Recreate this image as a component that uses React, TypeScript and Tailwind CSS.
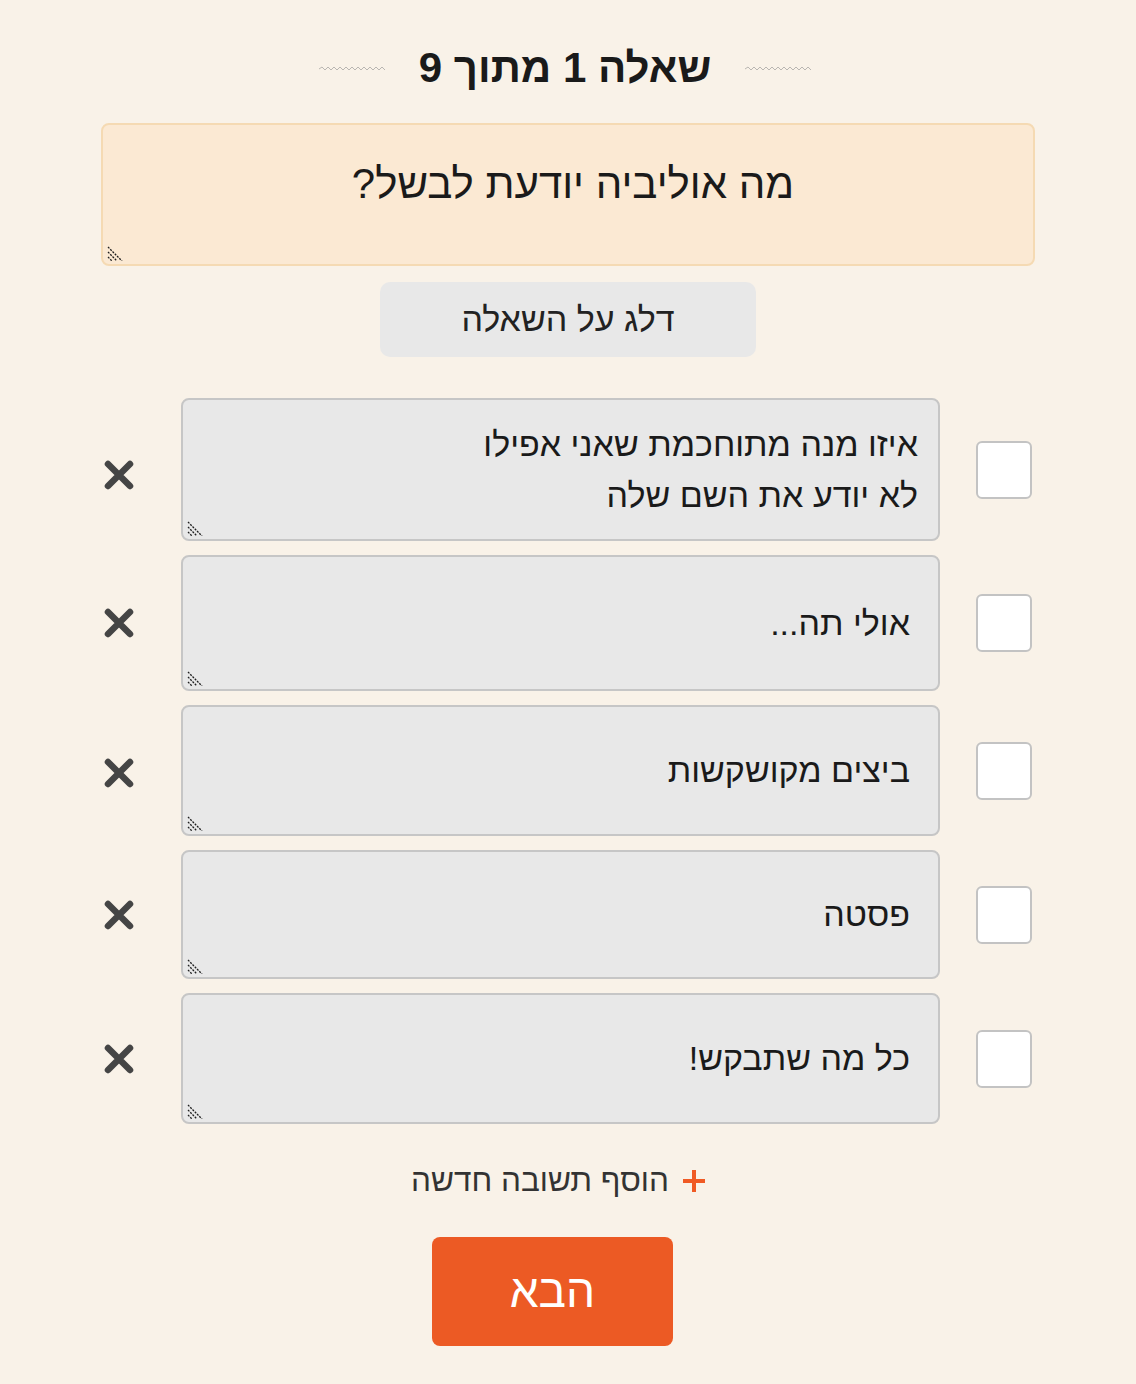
const answers = [
  { lines: ["איזו מנה מתוחכמת שאני אפילו", "לא יודע את השם שלה"], h: "h-[143px]", pr: "pr-5", xOff: "mt-[11px]" },
  { lines: ["אולי תה..."], h: "h-[136px]", pr: "pr-7", xOff: "" },
  { lines: ["ביצים מקושקשות"], h: "h-[131px]", pr: "pr-7", xOff: "mt-[4px]" },
  { lines: ["פסטה"], h: "h-[129px]", pr: "pr-7", xOff: "" },
  { lines: ["כל מה שתבקש!"], h: "h-[131px]", pr: "pr-7", xOff: "" },
]

function Squiggle() {
  // little zigzag rule beside the heading
  let d = "M0 3"
  for (let i = 1; i <= 22; i++) d += ` L${i * 3} ${i % 2 ? 1 : 4}`
  return (
    <svg width="66" height="5" viewBox="0 0 66 5" className="shrink-0">
      <path d={d} fill="none" stroke="#b9b6b2" strokeWidth="1" />
    </svg>
  )
}

function Grip() {
  return (
    <svg width="18" height="18" viewBox="0 0 18 18" className="absolute left-[3px] bottom-[3px]">
      <path
        d="M2 4 L16 18 M2 9 L11 18 M2 14 L6 18"
        stroke="#1f1f1f"
        strokeWidth="1.3"
        strokeDasharray="2 1.2"
        fill="none"
      />
    </svg>
  )
}

function Cross() {
  return (
    <svg width="32" height="32" viewBox="0 0 32 32">
      <path d="M5 5 L27 27 M27 5 L5 27" stroke="#454545" strokeWidth="6.5" strokeLinecap="round" />
    </svg>
  )
}

export default function App() {
  return (
    <div
      dir="rtl"
      className="min-h-[1384px] bg-[#f9f2e8] text-[#1a1a1a]"
      style={{ fontFamily: '"Liberation Sans", "DejaVu Sans", sans-serif' }}
    >
      <div className="w-[934px] mx-auto pt-[40px]">
        <div className="flex items-center justify-center gap-[34px] h-[56px] pr-[6px]">
          <Squiggle />
          <h1 className="text-[42px] font-bold leading-none">שאלה 1 מתוך 9</h1>
          <Squiggle />
        </div>

        <div className="relative mt-[27px] h-[143px] rounded-[8px] border-2 border-[#f5dab3] bg-[#fbe9d3] flex items-center justify-center pb-[22px] pl-[10px]">
          <span className="text-[42px]">מה אוליביה יודעת לבשל?</span>
          <Grip />
        </div>

        <div className="flex justify-center mt-[16px]">
          <button className="w-[376px] h-[75px] rounded-[10px] bg-[#e8e8e8] text-[34px] text-[#222]">
            דלג על השאלה
          </button>
        </div>

        <div className="mt-[41px] flex flex-col gap-[14px]">
          {answers.map((a, i) => (
            <div key={i} className="flex items-center">
              <div className="w-[56px] h-[58px] mr-[3px] ml-[36px] shrink-0 rounded-[6px] border-2 border-[#c3c3c3] bg-white" />
              <div
                className={`relative w-[759px] ${a.h} shrink-0 rounded-[8px] border-2 border-[#c6c6c6] bg-[#e8e8e8] flex flex-col justify-center ${a.pr} text-[34px] leading-[51px]`}
              >
                {a.lines.map((l) => (
                  <div key={l}>{l}</div>
                ))}
                <Grip />
              </div>
              <div className={`flex-1 flex justify-end pl-[2px] ${a.xOff}`}>
                <Cross />
              </div>
            </div>
          ))}
        </div>

        <div className="flex justify-center items-center gap-[12px] mt-[33px] pr-[18px] text-[31.5px] text-[#333]">
          <svg width="26" height="26" viewBox="0 0 26 26" className="shrink-0">
            <path d="M13 2 V24 M2 13 H24" stroke="#f05a24" strokeWidth="4" />
          </svg>
          <span>הוסף תשובה חדשה</span>
        </div>

        <div className="flex justify-center mt-[33px] pr-[31px]">
          <button className="w-[241px] h-[109px] rounded-[8px] bg-[#ec5a24] text-white text-[46px]">הבא</button>
        </div>
      </div>
    </div>
  )
}
